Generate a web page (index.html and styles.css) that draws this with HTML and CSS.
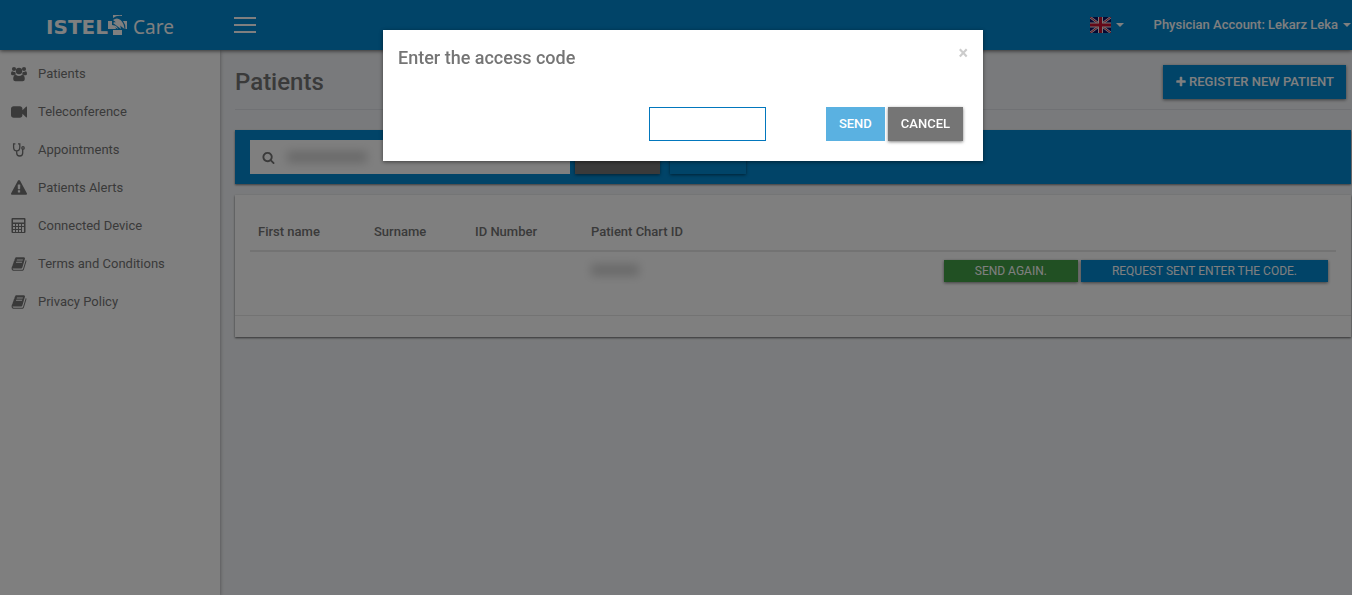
FILE: index.html
```html
<!DOCTYPE html>
<html lang="en">
<head>
<meta charset="utf-8">
<meta name="viewport" content="width=device-width, initial-scale=1">
<title>ISTEL Care</title>
<link rel="stylesheet" href="styles.css">
</head>
<body>
<svg class="sprite" aria-hidden="true">
  <symbol id="book" viewBox="0 0 1792 1792"><path d="M1703 478q40 57 18 129l-275 906q-19 64-76.5 107.5t-122.5 43.5h-923q-77 0-148.5-53.5t-99.5-131.5q-24-67-2-127 0-4 3-27t4-37q1-8-3-21.5t-3-19.5q2-11 8-21t16.5-23.5 16.5-23.5q23-38 45-91.5t30-91.5q3-10 .5-30t-.5-28q3-11 17-28t17-23q21-36 42-92t25-90q1-9-2.5-32t.5-28q4-13 22-30.5t22-22.5q19-26 42.5-84.5t27.5-96.5q1-8-3-25.5t-2-26.5q2-8 9-18t18-23 17-21q8-12 16.5-30.5t15-35 16-36 19.5-32 26.5-23.5 36-11.5 47.5 5.5l-1 3q38-9 51-9h761q74 0 114 56t18 130l-274 906q-36 119-71.5 153.5t-128.5 34.5h-869q-27 0-38 15-11 16-1 43 24 70 144 70h923q29 0 56-15.5t35-41.5l300-987q7-22 5-57 38 15 59 43zm-1064 2q-4 13 2 22.5t20 9.5h608q13 0 25.5-9.5t16.5-22.5l21-64q4-13-2-22.5t-20-9.5h-608q-13 0-25.5 9.5t-16.5 22.5zm-83 256q-4 13 2 22.5t20 9.5h608q13 0 25.5-9.5t16.5-22.5l21-64q4-13-2-22.5t-20-9.5h-608q-13 0-25.5 9.5t-16.5 22.5z"/></symbol>
</svg>

<header class="topbar">
  <a class="brand" href="#" aria-label="ISTEL Care">
    <span class="brand-name">ISTEL</span>
    <svg class="brand-mark" viewBox="0 0 20 20" aria-hidden="true">
      <path class="fill" d="M0 6h4v4q3 0 4 4H0zM5 15h9v5H5zM5 0h9v1q-5-1-9 2z"/>
      <path class="arc" d="M5 5q4-3 7.500 0t4 9M5 8q3-2 5.500 0.500T13 14M5 11q2-1 3.500 0.500T10 14"/>
      <path class="fill" d="M15 6h4v8h-1.500q0-5-2.500-8z"/>
    </svg>
    <span class="brand-sub">Care</span>
  </a>
  <button class="menu-toggle" type="button" aria-label="Toggle menu"><span></span><span></span><span></span></button>
  <div class="top-right">
    <button class="top-link" type="button" aria-label="Language">
      <svg class="flag" viewBox="0 0 21 16" aria-hidden="true">
        <path fill="#0a1266" d="M0 0h21v16H0z"/>
        <path stroke="#eee" stroke-width="2.400" d="M0 0l21 16M21 0L0 16"/>
        <path stroke="#c8102e" stroke-width="1" d="M0 0l21 16M21 0L0 16"/>
        <path stroke="#eee" stroke-width="5" d="M10.500 0v16M0 8h21"/>
        <path stroke="#c8102e" stroke-width="3" d="M10.500 0v16M0 8h21"/>
      </svg>
      <span class="caret"></span>
    </button>
    <button class="top-link" type="button">Physician Account: Lekarz Leka <span class="caret"></span></button>
  </div>
</header>

<div class="layout">
  <nav class="sidebar">
    <a href="#"><svg viewBox="0 0 16 16"><circle cx="3" cy="3" r="2.100"/><circle cx="13" cy="3" r="2.100"/><circle cx="8" cy="5" r="3.200"/><path d="M1.400 5.300Q3 6.500 4.300 5.900Q4.400 7.500 5.200 8.300Q4 8.300 3.200 9.200H1.600Q0 9.200 0 7.700Q0 5.300 1.400 5.300zM14.600 5.300Q13 6.500 11.700 5.900Q11.600 7.500 10.800 8.300Q12 8.300 12.800 9.200H14.400Q16 9.200 16 7.700Q16 5.300 14.600 5.300zM4.800 8.800Q8 11.200 11.200 8.800Q13.800 9 13.800 13Q13.800 15.200 11.600 15.200H4.400Q2.200 15.200 2.200 13Q2.200 9 4.800 8.800z"/></svg>Patients</a>
    <a href="#"><svg viewBox="0 0 1792 1792"><path d="M1792 352v1088q0 42-39 59-13 5-25 5-27 0-45-19l-403-403v166q0 119-84.500 203.500t-203.500 84.500h-704q-119 0-203.500-84.500t-84.500-203.500v-704q0-119 84.500-203.500t203.500-84.500h704q119 0 203.500 84.500t84.500 203.500v165l403-402q18-19 45-19 12 0 25 5 39 17 39 59z"/></svg>Teleconference</a>
    <a href="#"><svg viewBox="0 0 16 16"><path class="line" d="M4.400 1.900H2.600V5.200Q2.600 8.800 5.700 8.800T8.800 5.200V1.900H7M5.700 8.800V11Q5.700 14 8.700 14T11.700 11V7"/><circle class="line" cx="12" cy="5.900" r="1.200"/></svg>Appointments</a>
    <a href="#"><svg viewBox="0 0 1792 1792"><path d="M1024 1375v-190q0-14-9.500-23.500t-22.500-9.500h-192q-13 0-22.500 9.500t-9.500 23.500v190q0 14 9.500 23.500t22.500 9.500h192q13 0 22.500-9.500t9.500-23.500zm-2-374l18-459q0-12-10-19-13-11-24-11h-220q-11 0-24 11-10 7-10 21l17 457q0 10 10 16.500t24 6.500h185q14 0 23.500-6.500t10.500-16.500zm-14-934l768 1408q35 63-2 126-17 29-46.500 46t-63.500 17h-1536q-34 0-63.500-17t-46.500-46q-37-63-2-126l768-1408q17-31 47-49t65-18 65 18 47 49z"/></svg>Patients Alerts</a>
    <a href="#"><svg viewBox="0 0 16 16"><path fill-rule="evenodd" d="M1.500 0h12q1 0 1 1v13q0 1-1 1h-12q-1 0-1-1V1q0-1 1-1zM2 1.500V4.500h11V1.500zM2 6v2h2v-2zM5 6v2h2v-2zM8 6v2h2v-2zM11 6v2h2v-2zM2 9v2h2v-2zM5 9v2h2v-2zM8 9v2h2v-2zM2 12v2h2v-2zM5 12v2h2v-2zM8 12v2h2v-2zM11 9v5h2V9z"/></svg>Connected Device</a>
    <a href="#"><svg><use href="#book"/></svg>Terms and Conditions</a>
    <a href="#"><svg><use href="#book"/></svg>Privacy Policy</a>
  </nav>

  <main class="content">
    <div class="page-head">
      <h1>Patients</h1>
      <button class="btn btn-blue" type="button"><svg class="plus" viewBox="0 0 1792 1792" aria-hidden="true"><path d="M1600 736v192q0 40-28 68t-68 28h-416v416q0 40-28 68t-68 28h-192q-40 0-68-28t-28-68v-416h-416q-40 0-68-28t-28-68v-192q0-40 28-68t68-28h416v-416q0-40 28-68t68-28h192q40 0 68 28t28 68v416h416q40 0 68 28t28 68z"/></svg>REGISTER NEW PATIENT</button>
    </div>

    <form class="search-bar">
      <div class="search-box">
        <svg viewBox="0 0 1792 1792" aria-hidden="true"><path d="M1216 832q0-185-131.500-316.500t-316.500-131.500-316.500 131.500-131.500 316.500 131.500 316.500 316.500 131.500 316.500-131.500 131.500-316.500zm512 832q0 52-38 90t-90 38q-54 0-90-38l-343-342q-179 124-399 124-143 0-273.500-55.500t-225-150-150-225-55.500-273.500 55.500-273.500 150-225 225-150 273.500-55.500 273.500 55.500 225 150 150 225 55.500 273.500q0 220-124 399l343 343q37 37 37 90z"/></svg>
        <input type="text" aria-label="Search patients">
        <span class="smudge smudge-search"></span>
      </div>
      <button class="btn btn-dark search-btn" type="button" aria-label="Search"></button>
      <button class="btn btn-blue clear-btn" type="button" aria-label="Clear"></button>
    </form>

    <section class="card">
      <div class="card-body">
        <table>
          <colgroup><col class="c-first"><col class="c-sur"><col class="c-id"><col class="c-chart"><col></colgroup>
          <thead>
            <tr><th>First name</th><th>Surname</th><th>ID Number</th><th>Patient Chart ID</th><th></th></tr>
          </thead>
          <tbody>
            <tr>
              <td></td><td></td><td></td>
              <td><span class="smudge"></span></td>
              <td><div class="row-actions">
                <button class="btn btn-small btn-green" type="button">SEND AGAIN.</button>
                <button class="btn btn-small btn-blue" type="button">REQUEST SENT ENTER THE CODE.</button>
              </div></td>
            </tr>
          </tbody>
        </table>
      </div>
      <div class="card-foot"></div>
    </section>
  </main>
</div>

<div class="overlay">
  <div class="modal" role="dialog" aria-modal="true" aria-labelledby="modal-title">
    <div class="modal-head">
      <h2 id="modal-title">Enter the access code</h2>
      <button class="close" type="button" aria-label="Close">×</button>
    </div>
    <form class="modal-form">
      <input type="text" aria-labelledby="modal-title">
      <div class="modal-actions">
        <button class="btn btn-blue" type="button" disabled>SEND</button>
        <button class="btn btn-gray" type="button">CANCEL</button>
      </div>
    </form>
  </div>
</div>
</body>
</html>
```
FILE: styles.css
```css
* { box-sizing: border-box; }

body {
  margin: 0;
  min-height: 100vh;
  display: flex;
  flex-direction: column;
  background: #f3f5f8;
  color: #757575;
  font: 13px/20px Roboto, "Liberation Sans", sans-serif;
}

button, input { font: inherit; border: 0; padding: 0; border-radius: 0; }
a { color: inherit; text-decoration: none; }
h1, h2 { margin: 0; font-weight: 500; }
svg { display: block; flex: none; fill: currentColor; }
.sprite { position: absolute; width: 0; height: 0; }

.topbar {
  position: relative;
  height: 50px;
  display: flex;
  align-items: center;
  background: #0288d1;
  color: #fff;
  box-shadow: 0 1px 4px rgba(0, 0, 0, .6);
}

.brand {
  width: 220px;
  display: flex;
  align-items: center;
  justify-content: center;
  color: #fff;
}
.brand-name { font: 700 20px/24px "DejaVu Sans", sans-serif; padding-top: 4px; }
.brand-mark { width: 20px; height: 20px; }
.brand-sub { font: 400 19px/24px "Noto Sans", sans-serif; padding: 4px 0 0 5px; }

.menu-toggle {
  margin-left: 14px;
  display: grid;
  gap: 5px;
  background: none;
}
.menu-toggle span { width: 22px; height: 2px; background: #fff; }

.top-right { margin-left: auto; display: flex; gap: 30px; padding-right: 1px; }
.top-link {
  display: flex;
  align-items: center;
  gap: 5px;
  background: none;
  color: #fff;
  font-weight: 500;
}
.flag { width: 21px; height: 16px; }
.caret { border: 4px solid transparent; border-top-color: #fff; border-bottom: 0; }

.layout { flex: 1; display: flex; }

.sidebar {
  width: 220px;
  flex: none;
  padding-top: 5px;
  background: #fff;
  box-shadow: 0 1px 4px rgba(0, 0, 0, .4);
}
.sidebar a {
  height: 38px;
  display: flex;
  align-items: center;
  gap: 11px;
  padding-left: 11px;
}
.sidebar svg { width: 16px; height: 16px; }
.sidebar .line { fill: none; stroke: currentColor; stroke-width: 1.300; }

.content { flex: 1; min-width: 0; padding: 15px 1px 0 15px; }

.page-head {
  height: 45px;
  margin-bottom: 20px;
  padding-right: 5px;
  display: flex;
  justify-content: space-between;
  align-items: flex-start;
  border-bottom: 1px solid #e0e3e8;
}
h1 { font-size: 24px; line-height: 34px; }

.btn {
  height: 34px;
  padding: 0 13px;
  color: #fff;
  font-weight: 500;
  box-shadow: 0 1px 3px rgba(0, 0, 0, .5);
}
.btn-blue { background: #0288d1; }
.btn-green { background: #43a047; }
.btn-dark, .btn-gray { background: #757575; }
.btn:disabled { opacity: .65; box-shadow: none; }
.page-head .btn { display: flex; align-items: center; gap: 2px; padding: 0 12px; }
.plus { width: 12px; height: 12px; }

.search-bar {
  display: flex;
  padding: 10px 15px;
  margin-bottom: 11px;
  background: #0288d1;
  box-shadow: 0 1px 2px rgba(0, 0, 0, .5);
}
.search-box {
  position: relative;
  width: 320px;
  display: flex;
  align-items: center;
  gap: 8px;
  padding-left: 12px;
  background: #fff;
}
.search-box svg { width: 13px; height: 13px; }
.search-box input { flex: 1; min-width: 0; background: none; outline: 0; }
.search-btn { width: 85px; margin-left: 5px; }
.clear-btn { width: 76px; margin-left: 10px; }

.smudge {
  display: block;
  width: 48px;
  height: 12px;
  margin-top: 4px;
  background: #d4d4d4;
  filter: blur(5px);
}
.smudge-search { position: absolute; left: 37px; top: 7px; width: 80px; }

.card { background: #fff; box-shadow: 0 1px 2px rgba(0, 0, 0, .6); }
.card-body { height: 120px; padding: 18px 15px 0; }
.card-foot { height: 22px; border-top: 1px solid #e6e6e6; }

table { width: 100%; border-collapse: collapse; table-layout: fixed; }
.c-first, .c-id, .c-chart { width: 116px; }
.c-sur { width: 101px; }
th, td { padding: 8px; text-align: left; vertical-align: top; }
th { height: 38px; padding-top: 9px; font-weight: 500; border-bottom: 2px solid #e6e6e6; }
.row-actions { display: flex; justify-content: flex-end; gap: 3px; }
.btn-small { height: 22px; padding: 0 31px; font-size: 12px; font-weight: 400; }

.overlay {
  position: fixed;
  inset: 0;
  padding: 30px 0 0 14px;
  background: rgba(0, 0, 0, .5);
}
.modal {
  max-width: 600px;
  margin: 0 auto;
  padding: 15px 20px 20px 15px;
  background: #fff;
  box-shadow: 0 1px 4px rgba(0, 0, 0, .5);
}
.modal-head { display: flex; justify-content: space-between; margin: 0 -5px 36px 0; }
.modal-head h2 { font-size: 18px; line-height: 26px; }
.close {
  height: 16px;
  background: none;
  color: #ccc;
  font-size: 18px;
  font-weight: 700;
  line-height: 16px;
}
.modal-form { display: flex; justify-content: flex-end; gap: 60px; }
.modal-form input {
  width: 117px;
  height: 34px;
  padding: 0 12px;
  border: 1px solid #0277bd;
  outline: 0;
}
.modal-actions { display: flex; gap: 3px; }
```
